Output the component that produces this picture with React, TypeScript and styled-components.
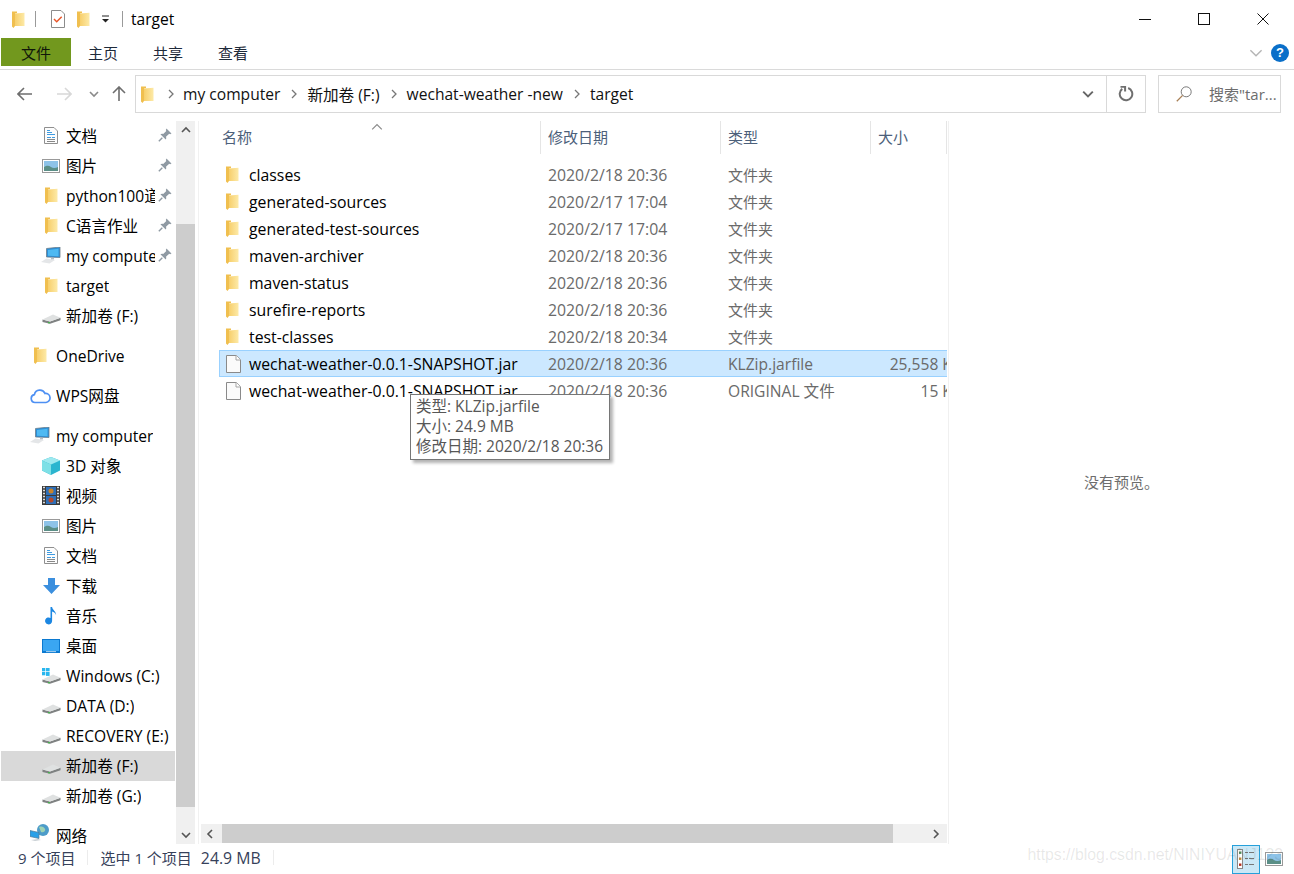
import React from "react";
import styled, { createGlobalStyle } from "styled-components";

const Global = createGlobalStyle`
  html, body { margin: 0; padding: 0; background: #fff; }
  body { font-family: "Open Sans", "Noto Sans CJK SC", sans-serif; font-size: 15.6px; color: #000; }
  * { box-sizing: border-box; }
`;

const Window = styled.div`
  position: relative;
  width: 1294px;
  height: 874px;
  display: flex;
  flex-direction: column;
  overflow: hidden;
  background: #fff;
`;

/* ---------- title bar ---------- */
const TitleBar = styled.div`
  height: 38px;
  display: flex;
  align-items: center;
  padding-left: 12px;
`;
const TitleSep = styled.div<{ $l: number; $r: number }>`
  width: 1px;
  height: 16px;
  background: #9a9a9a;
  margin: 0 ${(p) => p.$r}px 0 ${(p) => p.$l}px;
`;
const TitleGap = styled.div<{ $w: number }>`
  width: ${(p) => p.$w}px;
`;
const TitleText = styled.span`
  line-height: 20px;
`;
const WindowControls = styled.div`
  margin-left: auto;
  display: flex;
  height: 100%;
  padding-right: 2px;
`;
const WindowButton = styled.div`
  width: 59px;
  height: 100%;
  display: flex;
  align-items: center;
  justify-content: center;
`;

/* ---------- ribbon tabs ---------- */
const Ribbon = styled.div`
  height: 32px;
  display: flex;
  align-items: flex-start;
  padding-left: 1px;
  border-bottom: 1px solid #dadada;
`;
const RibbonTab = styled.div<{ $active?: boolean; $w: number }>`
  width: ${(p) => p.$w}px;
  height: 28px;
  display: flex;
  align-items: center;
  justify-content: center;
  font-size: 15px;
  background: ${(p) => (p.$active ? "#72981e" : "transparent")};
  color: ${(p) => (p.$active ? "#10160a" : "#1e2a3a")};
`;
const RibbonRight = styled.div`
  margin-left: auto;
  display: flex;
  align-items: center;
  gap: 8px;
  height: 28px;
  padding-right: 5px;
  padding-top: 2px;
`;
const HelpBadge = styled.div`
  width: 18px;
  height: 18px;
  border-radius: 50%;
  background: #0a6fc9;
  color: #fff;
  font-size: 13px;
  font-weight: 700;
  line-height: 18px;
  text-align: center;
  font-family: "Liberation Sans", sans-serif;
`;

/* ---------- navigation row ---------- */
const NavRow = styled.div`
  height: 50px;
  display: flex;
  align-items: flex-start;
  padding-top: 5px;
`;
const NavButtons = styled.div`
  width: 135px;
  height: 38px;
  display: flex;
  align-items: center;
  padding-left: 16px;
`;
const NavSlot = styled.div<{ $w: number; $ml?: number }>`
  width: ${(p) => p.$w}px;
  margin-left: ${(p) => p.$ml ?? 0}px;
  display: flex;
  align-items: center;
  justify-content: center;
`;
const AddressBox = styled.div`
  width: 1011px;
  height: 38px;
  border: 1px solid #d9d9d9;
  display: flex;
  align-items: center;
  padding-left: 5px;
`;
const Crumb = styled.span`
  color: #111;
  white-space: nowrap;
`;
const CrumbArrow = styled.div<{ $l: number; $r: number }>`
  display: flex;
  margin: 0 ${(p) => p.$r}px 0 ${(p) => p.$l}px;
`;
const AddressEnd = styled.div`
  margin-left: auto;
  display: flex;
  height: 100%;
  align-items: center;
`;
const AddressDrop = styled.div`
  width: 40px;
  height: 100%;
  display: flex;
  align-items: center;
  justify-content: center;
  padding-left: 2px;
  border-right: 1px solid #d9d9d9;
`;
const Refresh = styled.div`
  width: 38px;
  display: flex;
  justify-content: center;
`;
const SearchBox = styled.div`
  width: 123px;
  height: 38px;
  margin-left: 12px;
  padding-bottom: 1px;
  border: 1px solid #d9d9d9;
  display: flex;
  align-items: center;
  padding-left: 17px;
  gap: 17px;
  font-size: 15px;
  color: #6d6d6d;
  white-space: nowrap;
  overflow: hidden;
`;

/* ---------- body ---------- */
const Body = styled.div`
  height: 725px;
  display: flex;
  padding-top: 1px;
`;
const NavPane = styled.div`
  width: 176px;
  padding-left: 1px;
  overflow: hidden;
  display: flex;
  flex-direction: column;
`;
const NavItem = styled.div<{ $level: number; $selected?: boolean; $gap?: boolean }>`
  flex: none;
  height: 30px;
  margin-top: ${(p) => (p.$gap ? 10 : 0)}px;
  margin-right: 1px;
  padding-bottom: 1px;
  display: flex;
  align-items: center;
  position: relative;
  padding-left: ${(p) => (p.$level ? 39 : 28)}px;
  background: ${(p) => (p.$selected ? "#d9d9d9" : "transparent")};
  &:last-child {
    height: 24px;
    padding: 3px 0 0 28px;
    align-items: flex-start;
  }
`;
const NavIcon = styled.div<{ $level: number }>`
  width: 22px;
  margin-right: ${(p) => (p.$level ? 4 : 5)}px;
  display: flex;
  justify-content: center;
  align-items: center;
  flex: none;
`;
const NavLabel = styled.span<{ $clip?: boolean }>`
  white-space: nowrap;
  overflow: hidden;
  max-width: ${(p) => (p.$clip ? "89px" : "none")};
`;
const PinMark = styled.div`
  position: absolute;
  right: 3px;
  top: 7px;
  display: flex;
`;
const VBar = styled.div`
  width: 19px;
  height: 723px;
  background: #f0f0f0;
  display: flex;
  flex-direction: column;
`;
const ScrollEnd = styled.div`
  flex: none;
  height: 18px;
  display: flex;
  align-items: center;
  justify-content: center;
`;
const VThumb = styled.div`
  height: 583px;
  margin-top: 85px;
  background: #cdcdcd;
`;
const VEnd = styled(ScrollEnd)`
  margin-top: auto;
`;
const Divider = styled.div`
  width: 3px;
  border-left: 1px solid #f1f1f1;
  margin-left: 3px;
  height: 723px;
`;

const Content = styled.div`
  width: 746px;
  height: 722px;
  display: flex;
  flex-direction: column;
  overflow: hidden;
  position: relative;
`;
const HeaderRow = styled.div`
  flex: none;
  height: 33px;
  display: grid;
  grid-template-columns: 340px 180px 150px 76px;
  position: relative;
`;
const HeaderCell = styled.div`
  font-size: 15px;
  color: #4c607a;
  padding: 5px 0 0 7px;
  height: 33px;
  border-right: 1px solid #e5e5e5;
  &:first-child { padding-left: 21px; }
  &:last-child { border-right: none; }
`;
const SortCaret = styled.div`
  position: absolute;
  left: 170px;
  top: 0;
  display: flex;
`;
const Rows = styled.div`
  flex: 1;
  padding: 7px 0 0 18px;
  overflow: hidden;
`;
const FileRow = styled.div<{ $selected?: boolean }>`
  width: 744px;
  height: 27px;
  display: grid;
  grid-template-columns: 321px 180px 150px 91px;
  align-items: center;
  border: 1px solid ${(p) => (p.$selected ? "#99d1ff" : "transparent")};
  background: ${(p) => (p.$selected ? "#cce8ff" : "transparent")};
`;
const NameCell = styled.div`
  display: flex;
  align-items: center;
  padding-left: 6px;
  font-size: 15.8px;
  white-space: nowrap;
`;
const NameIcon = styled.div`
  width: 17px;
  margin-right: 6px;
  display: flex;
  justify-content: flex-start;
`;
const MetaCell = styled.div<{ $right?: boolean; $size?: number }>`
  color: #6a6a6a;
  font-size: ${(p) => p.$size ?? 15.6}px;
  white-space: nowrap;
  padding-left: 7px;
  text-align: ${(p) => (p.$right ? "right" : "left")};
`;
const HBar = styled.div`
  margin-top: auto;
  flex: none;
  height: 19px;
  background: #f0f0f0;
  display: flex;
`;
const HThumb = styled.div`
  flex: none;
  width: 671px;
  margin-left: 3px;
  background: #cdcdcd;
`;
const HEnd = styled(ScrollEnd)`
  width: 18px;
  height: 19px;
`;
const HEndRight = styled(HEnd)`
  margin-left: auto;
  margin-right: 6px;
  width: 30px;
  justify-content: flex-end;
`;

const Preview = styled.div`
  flex: 1;
  border-left: 1px solid #f0f0f0;
  margin-left: 1px;
  display: flex;
  justify-content: center;
  padding-top: 350px;
  font-size: 15px;
  color: #6d6d6d;
  height: 723px;
`;

/* ---------- status bar ---------- */
const StatusBar = styled.div`
  flex: 1;
  display: flex;
  align-items: center;
  font-size: 15px;
  color: #36415a;
  padding-left: 18px;
  position: relative;
`;
const StatusText = styled.span<{ $ml?: number; $size?: number }>`
  margin-left: ${(p) => p.$ml ?? 0}px;
  margin-bottom: 4px;
  font-size: ${(p) => p.$size ?? 15}px;
  white-space: nowrap;
`;
const StatusSep = styled.div<{ $ml: number }>`
  width: 1px;
  height: 15px;
  margin-bottom: 4px;
  background: #ececec;
  margin-left: ${(p) => p.$ml}px;
`;
const ViewSwitch = styled.div`
  margin-left: auto;
  margin-top: -1px;
  display: flex;
  align-items: flex-start;
  padding-right: 6px;
  height: 29px;
`;
const ViewButton = styled.div<{ $on?: boolean }>`
  width: 28px;
  height: 29px;
  display: flex;
  align-items: center;
  justify-content: center;
  border: 1px solid ${(p) => (p.$on ? "#26a0da" : "transparent")};
  background: ${(p) => (p.$on ? "#cbe8f6" : "transparent")};
`;
const Watermark = styled.div`
  position: absolute;
  right: 11px;
  top: 846px;
  font-family: "Liberation Sans", sans-serif;
  font-size: 15.8px;
  color: rgba(60, 60, 60, 0.12);
  white-space: nowrap;
`;

/* ---------- tooltip ---------- */
const Tip = styled.div`
  position: absolute;
  left: 410px;
  top: 394px;
  width: 200px;
  height: 66px;
  background: #fff;
  border: 1px solid #767676;
  box-shadow: 3px 3px 3px rgba(0, 0, 0, 0.3);
  padding: 1px 5px;
  font-size: 15.5px;
  line-height: 20px;
  color: #575757;
  white-space: nowrap;
`;

/* ---------- drawings ---------- */
const FolderIcon = () => (
  <svg width="13" height="17" viewBox="0 0 13 17">
    <defs>
      <linearGradient id="folderBody" x1="0" x2="1" y1="0" y2="0">
        <stop offset="0" stopColor="#f7cf6c" />
        <stop offset="1" stopColor="#fdeaa8" />
      </linearGradient>
    </defs>
    <path d="M0 .5h5v1.500L3 2.600V15L1.500 17 0 15.500z" fill="#f0bf4f" />
    <path d="M3 2.500L12.500 1.800V15H3z" fill="url(#folderBody)" />
  </svg>
);
const TaskDoc = () => (
  <svg width="14" height="18" viewBox="0 0 14 18">
    <path d="M.5.500h9.500l3.500 3.500v13.500H.5z" fill="#fff" stroke="#8c8c8c" />
    <path d="M3 9l2.700 2.700 5-5" fill="none" stroke="#e8562a" strokeWidth="1.500" />
  </svg>
);
const SmallDrop = () => (
  <svg width="9" height="8" viewBox="0 0 9 8">
    <path d="M1 1h7" stroke="#222" />
    <path d="M1 4h7L4.500 7.500z" fill="#222" />
  </svg>
);
const Chevron = ({ dir, color = "#666", w = 1.6, s = 10 }: { dir: "up" | "down" | "left" | "right"; color?: string; w?: number; s?: number }) => {
  const d = { up: "M1 7l4-4 4 4", down: "M1 3l4 4 4-4", left: "M7 1L3 5l4 4", right: "M3 1l4 4-4 4" }[dir];
  return (
    <svg width={s} height={s} viewBox="0 0 10 10">
      <path d={d} fill="none" stroke={color} strokeWidth={w} />
    </svg>
  );
};
const ArrowGlyph = styled.svg<{ $rot: number }>`
  transform: rotate(${(p) => p.$rot}deg);
`;
const Arrow = ({ rot, color }: { rot: number; color: string }) => (
  <ArrowGlyph $rot={rot} width="16" height="16" viewBox="0 0 16 16">
    <path d="M1 8h14M7 2L1 8l6 6" fill="none" stroke={color} strokeWidth="1.600" />
  </ArrowGlyph>
);
const RefreshIcon = () => (
  <svg width="16" height="16" viewBox="0 0 16 16">
    <path d="M5 2.400A6.300 6.300 0 1 0 11 2.400" fill="none" stroke="#6f6f6f" strokeWidth="2" transform="rotate(-8 8 8)" />
    <path d="M2.500.8h4.600v4.600" fill="none" stroke="#6f6f6f" strokeWidth="2" />
  </svg>
);
const SearchGlass = () => (
  <svg width="16" height="16" viewBox="0 0 16 16">
    <circle cx="10.200" cy="5.800" r="5" fill="none" stroke="#7a7a7a" />
    <path d="M6.600 9.400L.8 15.200" stroke="#a87f56" strokeWidth="1.300" />
  </svg>
);
const DocIcon = () => (
  <svg width="14" height="17" viewBox="0 0 14 17">
    <path d="M.5.500h9.500l3.500 3.500v12.500H.5z" fill="#fdfdfd" stroke="#8f8f8f" />
    <path d="M3 3.500h3M3 5.500h5M3 7.500h8" stroke="#3f9be0" />
    <path d="M3 10.500h4M8 10.500h3" stroke="#3f9be0" />
    <path d="M3 12.500h8M3 14.500h8" stroke="#888" />
  </svg>
);
const PictureIcon = () => (
  <svg width="18" height="14" viewBox="0 0 18 14">
    <rect x=".5" y=".5" width="17" height="13" fill="#fff" stroke="#999" />
    <rect x="2" y="2" width="14" height="10" fill="#8ec3e8" />
    <path d="M2 8c3-2 5-1.500 7 0s5 1 7 0v4H2z" fill="#5b8f87" />
  </svg>
);
const PcIcon = () => (
  <svg width="20" height="17" viewBox="0 0 20 17">
    <path d="M5.500 1.500L19 0v10.500L5.500 10z" fill="#2b8fd8" stroke="#6d7d8a" strokeWidth=".8" />
    <path d="M7 3l10.500-1.200v7.400L7 8.700z" fill="#4fb9f2" />
    <path d="M0 15l5.500-3.500 8.500 1.500-5.500 3.500z" fill="#e4e6e8" />
    <path d="M10 10.800h3v1.600h-3z" fill="#b7bec4" />
  </svg>
);
const DriveIcon = ({ win }: { win?: boolean }) => (
  <svg width="19" height="16" viewBox="0 0 19 16">
    {win && (
      <g fill="#29b6ee">
        <rect x="0" y="0" width="3.300" height="3.300" />
        <rect x="4" y="-.6" width="3.600" height="3.900" />
        <rect x="0" y="4" width="3.300" height="3.300" />
        <rect x="4" y="4" width="3.600" height="3.900" />
      </g>
    )}
    <path d="M.5 11.500v2.400L8 15.800l10.500-3.600v-2.400L8 13.500z" fill="#7f8282" />
    <path d="M.5 11.500L8 13.500l10.500-3.700L11 6.500z" fill="#dfe1e1" />
    <rect x="6" y="14" width="1.800" height="1.300" fill="#42b54b" />
  </svg>
);
const CloudIcon = () => (
  <svg width="21" height="16" viewBox="0 0 21 16">
    <path
      d="M5 14.500a4 4 0 0 1-.6-7.900A5.600 5.600 0 0 1 15 5.500a4.500 4.500 0 0 1 1 9z"
      fill="#fff"
      stroke="#4e90f3"
      strokeWidth="1.700"
    />
  </svg>
);
const CubeIcon = () => (
  <svg width="18" height="18" viewBox="0 0 18 18">
    <path d="M9 0l9 3.500v10L9 18 0 13.500v-10z" fill="#2bb5cf" />
    <path d="M9 0l9 3.500L9 7.500 0 3.500z" fill="#9ee9ef" />
    <path d="M0 3.500L9 7.500V18L0 13.500z" fill="#7ee0e6" />
  </svg>
);
const FilmIcon = () => (
  <svg width="18" height="19" viewBox="0 0 18 19">
    <rect width="18" height="19" fill="#3a3a3a" />
    <path d="M1 1.500h2M1 4.500h2M1 7.500h2M1 10.500h2M1 13.500h2M1 16.500h2M15 1.500h2M15 4.500h2M15 7.500h2M15 10.500h2M15 13.500h2M15 16.500h2" stroke="#ddd" strokeWidth="1.300" />
    <rect x="4" y="1" width="10" height="8" fill="#2e6fb8" />
    <rect x="4" y="10" width="10" height="8" fill="#2e6fb8" />
    <circle cx="9" cy="5" r="2.500" fill="#c9832a" />
    <circle cx="9" cy="14" r="2.500" fill="#b5482a" />
  </svg>
);
const DownIcon = () => (
  <svg width="17" height="16" viewBox="0 0 17 16">
    <path d="M5 0h7v7h5l-8.500 9L0 7h5z" fill="#3b8fde" />
  </svg>
);
const NoteIcon = () => (
  <svg width="12" height="18" viewBox="0 0 12 18">
    <path d="M5.500 0h1.600c.3 3 4 4 4 8-1-2-2.500-3-4-3.400V14a3.500 3.500 0 1 1-1.600-3z" fill="#1c87e2" />
  </svg>
);
const DesktopIcon = () => (
  <svg width="18" height="14" viewBox="0 0 18 14">
    <rect width="18" height="14" fill="#0b79d0" />
    <rect x="1" y="1" width="16" height="11" fill="#3aa6f2" />
    <rect x="4" y="12.300" width="10" height=".8" fill="#d8ecfa" />
  </svg>
);
const NetworkIcon = () => (
  <svg width="20" height="17" viewBox="0 0 20 17">
    <circle cx="13" cy="6" r="6" fill="#4d9cc9" />
    <path d="M9 3c3-1 5 0 6 2s-2 4-4 3z" fill="#9ed3b4" />
    <path d="M0 6.500l9 2v6l-9-2z" fill="#2aa0e8" stroke="#5a7a92" strokeWidth=".7" />
    <path d="M1 16l7-1 3 1-6 1z" fill="#c9cfd4" />
  </svg>
);
const PinIcon = () => (
  <svg width="14" height="14" viewBox="0 0 14 14">
    <path d="M8.500.5l5 5-1.300.7-1-.5L8 8.800c.4 1 .3 2-.3 2.800L2.400 6.300c.8-.6 1.800-.7 2.800-.3L8.300 3 7.800 2z" fill="#8f9aa3" />
    <path d="M4.300 9.700L.8 13.200" stroke="#8f9aa3" strokeWidth="1.400" />
  </svg>
);
const BlankFile = () => (
  <svg width="15" height="18" viewBox="0 0 15 18">
    <path d="M.5.500h9.800l4.200 4.200v12.800H.5z" fill="#fbfbfb" stroke="#8a8a8a" />
    <path d="M10 .5v4.500h4.500" fill="#fff" stroke="#a5a5a5" />
  </svg>
);
const DetailsGlyph = () => (
  <svg width="18" height="20" viewBox="0 0 18 20">
    <rect x=".5" y=".5" width="5" height="19" fill="#fff" stroke="#888" />
    <rect x="2" y="2.500" width="2.400" height="2.400" fill="#4d8a5a" />
    <rect x="2" y="8.500" width="2.400" height="2.400" fill="#c08a3a" />
    <rect x="2" y="14.500" width="2.400" height="2.400" fill="#b5301e" />
    <path d="M8 3.500h3M12 3.500h5M8 9.500h3M12 9.500h5M8 15.500h3M12 15.500h5" stroke="#777" />
  </svg>
);
const MinGlyph = () => (
  <svg width="12" height="12" viewBox="0 0 12 12"><path d="M0 6.500h12" stroke="#111" /></svg>
);
const MaxGlyph = () => (
  <svg width="12" height="12" viewBox="0 0 12 12"><rect x=".5" y=".5" width="11" height="11" fill="none" stroke="#111" /></svg>
);
const CloseGlyph = () => (
  <svg width="12" height="12" viewBox="0 0 12 12"><path d="M.5.500l11 11M11.500.500l-11 11" stroke="#111" /></svg>
);

/* ---------- data ---------- */
type NavEntry = { icon: React.ReactNode; label: string; level: number; pin?: boolean; gap?: boolean; selected?: boolean };

const navEntries: NavEntry[] = [
  { icon: <DocIcon />, label: "文档", level: 1, pin: true },
  { icon: <PictureIcon />, label: "图片", level: 1, pin: true },
  { icon: <FolderIcon />, label: "python100道题", level: 1, pin: true },
  { icon: <FolderIcon />, label: "C语言作业", level: 1, pin: true },
  { icon: <PcIcon />, label: "my computer", level: 1, pin: true },
  { icon: <FolderIcon />, label: "target", level: 1 },
  { icon: <DriveIcon />, label: "新加卷 (F:)", level: 1 },
  { icon: <FolderIcon />, label: "OneDrive", level: 0, gap: true },
  { icon: <CloudIcon />, label: "WPS网盘", level: 0, gap: true },
  { icon: <PcIcon />, label: "my computer", level: 0, gap: true },
  { icon: <CubeIcon />, label: "3D 对象", level: 1 },
  { icon: <FilmIcon />, label: "视频", level: 1 },
  { icon: <PictureIcon />, label: "图片", level: 1 },
  { icon: <DocIcon />, label: "文档", level: 1 },
  { icon: <DownIcon />, label: "下载", level: 1 },
  { icon: <NoteIcon />, label: "音乐", level: 1 },
  { icon: <DesktopIcon />, label: "桌面", level: 1 },
  { icon: <DriveIcon win />, label: "Windows (C:)", level: 1 },
  { icon: <DriveIcon />, label: "DATA (D:)", level: 1 },
  { icon: <DriveIcon />, label: "RECOVERY (E:)", level: 1 },
  { icon: <DriveIcon />, label: "新加卷 (F:)", level: 1, selected: true },
  { icon: <DriveIcon />, label: "新加卷 (G:)", level: 1 },
  { icon: <NetworkIcon />, label: "网络", level: 0, gap: true },
];

const SNAPSHOT = "wechat-weather-0.0.1-SNAPSHOT.jar";
const files = [
  { name: "classes", date: "2020/2/18 20:36", type: "文件夹", size: "", folder: true },
  { name: "generated-sources", date: "2020/2/17 17:04", type: "文件夹", size: "", folder: true },
  { name: "generated-test-sources", date: "2020/2/17 17:04", type: "文件夹", size: "", folder: true },
  { name: "maven-archiver", date: "2020/2/18 20:36", type: "文件夹", size: "", folder: true },
  { name: "maven-status", date: "2020/2/18 20:36", type: "文件夹", size: "", folder: true },
  { name: "surefire-reports", date: "2020/2/18 20:36", type: "文件夹", size: "", folder: true },
  { name: "test-classes", date: "2020/2/18 20:34", type: "文件夹", size: "", folder: true },
  { name: SNAPSHOT, date: "2020/2/18 20:36", type: "KLZip.jarfile", size: "25,558 KB", selected: true },
  { name: SNAPSHOT, date: "2020/2/18 20:36", type: "ORIGINAL 文件", size: "15 KB" },
];

export default function App() {
  return (
    <Window>
      <Global />
      <TitleBar>
        <FolderIcon />
        <TitleSep $l={10} $r={15} />
        <TaskDoc />
        <TitleGap $w={12} />
        <FolderIcon />
        <TitleGap $w={11} />
        <SmallDrop />
        <TitleSep $l={12} $r={8} />
        <TitleText>target</TitleText>
        <WindowControls>
          <WindowButton><MinGlyph /></WindowButton>
          <WindowButton><MaxGlyph /></WindowButton>
          <WindowButton><CloseGlyph /></WindowButton>
        </WindowControls>
      </TitleBar>

      <Ribbon>
        <RibbonTab $active $w={70}>文件</RibbonTab>
        <RibbonTab $w={64}>主页</RibbonTab>
        <RibbonTab $w={66}>共享</RibbonTab>
        <RibbonTab $w={64}>查看</RibbonTab>
        <RibbonRight>
          <Chevron dir="down" color="#b5b5b5" w={1} s={14} />
          <HelpBadge>?</HelpBadge>
        </RibbonRight>
      </Ribbon>

      <NavRow>
        <NavButtons>
          <NavSlot $w={18}><Arrow rot={0} color="#6e6e6e" /></NavSlot>
          <NavSlot $w={18} $ml={21}><Arrow rot={180} color="#d8d8d8" /></NavSlot>
          <NavSlot $w={17} $ml={12}><Chevron dir="down" color="#8a8a8a" w={1.6} s={10} /></NavSlot>
          <NavSlot $w={18} $ml={8}><Arrow rot={90} color="#6e6e6e" /></NavSlot>
        </NavButtons>
        <AddressBox>
          <FolderIcon />
          <CrumbArrow $l={12} $r={7}><Chevron dir="right" color="#777" w={1.3} /></CrumbArrow>
          <Crumb>my computer</Crumb>
          <CrumbArrow $l={9} $r={8}><Chevron dir="right" color="#777" w={1.3} /></CrumbArrow>
          <Crumb>新加卷 (F:)</Crumb>
          <CrumbArrow $l={9} $r={8}><Chevron dir="right" color="#777" w={1.3} /></CrumbArrow>
          <Crumb>wechat-weather -new</Crumb>
          <CrumbArrow $l={9} $r={8}><Chevron dir="right" color="#777" w={1.3} /></CrumbArrow>
          <Crumb>target</Crumb>
          <AddressEnd>
            <AddressDrop><Chevron dir="down" color="#666" w={1.6} s={12} /></AddressDrop>
            <Refresh><RefreshIcon /></Refresh>
          </AddressEnd>
        </AddressBox>
        <SearchBox>
          <SearchGlass />
          <span>搜索"tar...</span>
        </SearchBox>
      </NavRow>

      <Body>
        <NavPane>
          {navEntries.map((e, i) => (
            <NavItem key={i} $level={e.level} $gap={e.gap} $selected={e.selected}>
              <NavIcon $level={e.level}>{e.icon}</NavIcon>
              <NavLabel $clip={e.pin}>{e.label}</NavLabel>
              {e.pin && <PinMark><PinIcon /></PinMark>}
            </NavItem>
          ))}
        </NavPane>
        <VBar>
          <ScrollEnd><Chevron dir="up" color="#555" w={1.6} /></ScrollEnd>
          <VThumb />
          <VEnd><Chevron dir="down" color="#555" w={1.6} /></VEnd>
        </VBar>
        <Divider />
        <Content>
          <HeaderRow>
            <HeaderCell>名称</HeaderCell>
            <HeaderCell>修改日期</HeaderCell>
            <HeaderCell>类型</HeaderCell>
            <HeaderCell>大小</HeaderCell>
            <SortCaret><Chevron dir="up" color="#8a8a8a" w={1} s={12} /></SortCaret>
          </HeaderRow>
          <Rows>
            {files.map((f, i) => (
              <FileRow key={i} $selected={f.selected}>
                <NameCell>
                  <NameIcon>{f.folder ? <FolderIcon /> : <BlankFile />}</NameIcon>
                  {f.name}
                </NameCell>
                <MetaCell $size={15.8}>{f.date}</MetaCell>
                <MetaCell $size={f.folder ? 15 : 15.6}>{f.type}</MetaCell>
                <MetaCell $right>{f.size}</MetaCell>
              </FileRow>
            ))}
          </Rows>
          <HBar>
            <HEnd><Chevron dir="left" color="#555" w={1.6} /></HEnd>
            <HThumb />
            <HEndRight><Chevron dir="right" color="#555" w={1.6} /></HEndRight>
          </HBar>
        </Content>
        <Preview>没有预览。</Preview>
      </Body>

      <StatusBar>
        <StatusText>9 个项目</StatusText>
        <StatusSep $ml={12} />
        <StatusText $ml={12}>选中 1 个项目</StatusText>
        <StatusText $ml={9} $size={15.8}>24.9 MB</StatusText>
        <StatusSep $ml={12} />
        <ViewSwitch>
          <ViewButton $on><DetailsGlyph /></ViewButton>
          <ViewButton><PictureIcon /></ViewButton>
        </ViewSwitch>
      </StatusBar>

      <Tip>
        类型: KLZip.jarfile
        <br />
        大小: 24.9 MB
        <br />
        修改日期: 2020/2/18 20:36
      </Tip>
      <Watermark>https://blog.csdn.net/NINIYUANJ123</Watermark>
    </Window>
  );
}
